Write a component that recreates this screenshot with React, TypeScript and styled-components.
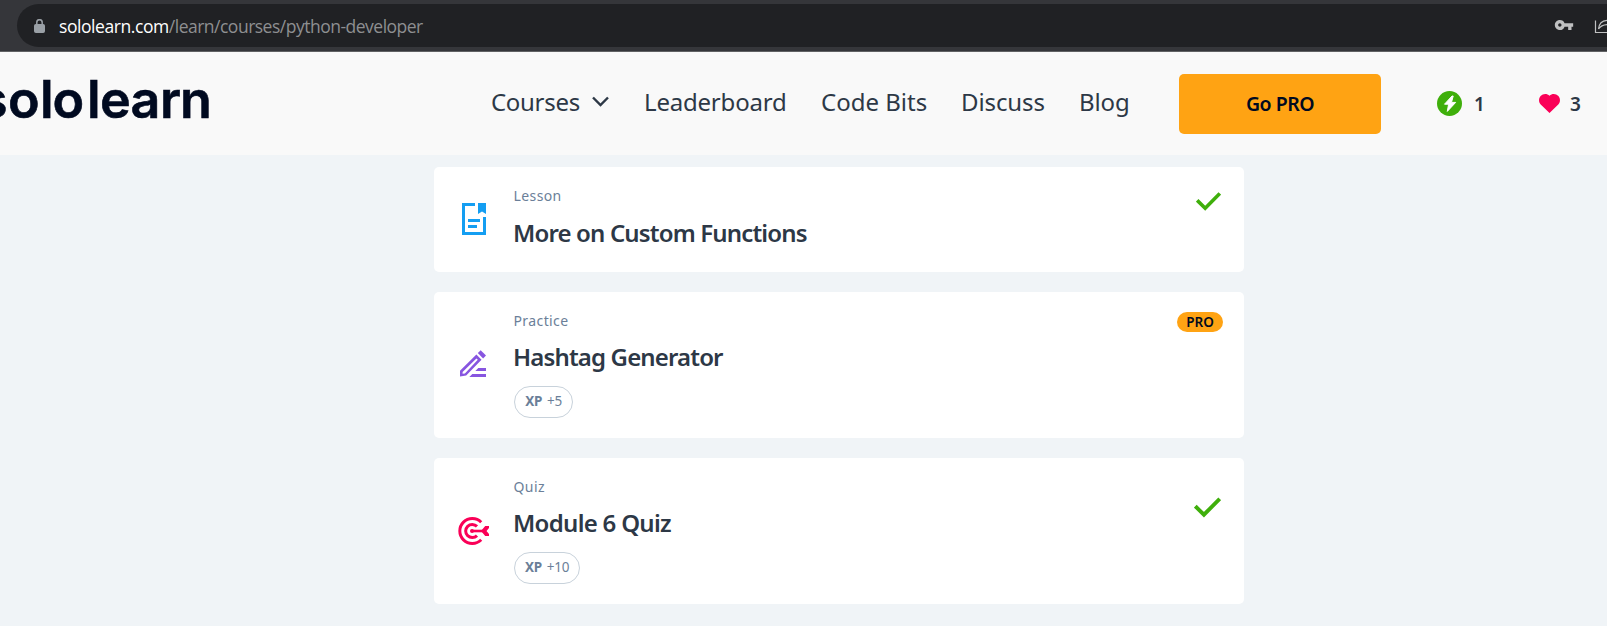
import React from "react";
import styled, { createGlobalStyle } from "styled-components";
import { MdVpnKey } from "react-icons/md";

const GlobalStyle = createGlobalStyle`
  * { box-sizing: border-box; }
  html, body { margin: 0; overflow: hidden; background: #f0f4f7; }
  body { font-family: "Noto Sans", "Open Sans", sans-serif; color: #2d3846; }
  svg { display: block; flex: none; }
`;

const Page = styled.div`
  display: flex;
  flex-direction: column;
  width: 100vw;
  height: 100vh;
  overflow: hidden;
`;

const BrowserBar = styled.div`
  flex: none;
  height: 52px;
  padding: 4px 0 4px 17px;
  background: #35363a;
  border-bottom: 1px solid #616264;
`;

const AddressField = styled.div`
  display: flex;
  align-items: center;
  height: 43px;
  padding-left: 17px;
  border-radius: 22px 0 0 22px;
  background: #202124;
  color: #9aa0a6;
`;

const Url = styled.div`
  flex: 1;
  margin-left: 14px;
  font: 17.5px/24px "Open Sans", "Noto Sans", sans-serif;
  letter-spacing: -0.5px;
  color: #8e8f91;
  white-space: nowrap;
`;

const Host = styled.span`
  color: #fff;
  letter-spacing: -0.43px;
`;

const FieldIcons = styled.div`
  display: flex;
  align-items: center;
  gap: 20px;
  padding-bottom: 1px;
  color: #bfc0c1;
`;

const Header = styled.header`
  flex: none;
  display: flex;
  align-items: center;
  height: 103px;
  background: #f9f9f9;
`;

const Logo = styled.svg`
  font-family: Inter, sans-serif;
  font-size: 52px;
  font-weight: 600;
  fill: #000a20;
  stroke: #000a20;
  stroke-width: 0.6px;
`;

const Nav = styled.nav`
  display: flex;
  align-items: center;
  margin-left: 268px;
`;

const NavItem = styled.a<{ $width: number; $spacing?: number }>`
  display: flex;
  align-items: center;
  width: ${(p) => p.$width}px;
  padding-bottom: 4px;
  font-size: 24px;
  line-height: 32px;
  letter-spacing: ${(p) => p.$spacing ?? 0}px;
  white-space: nowrap;
`;

const Chevron = styled.svg`
  margin: 0 0 0 12px;
`;

const ProButton = styled.button`
  width: 202px;
  height: 60px;
  margin-bottom: -1px;
  padding: 0;
  border: 0;
  border-radius: 5px;
  background: #ffa313;
  color: #000a20;
  font: 600 19.5px/26px "Noto Sans", sans-serif;
  letter-spacing: -0.5px;
`;

const Stat = styled.div<{ $left: number; $gap: number }>`
  display: flex;
  align-items: center;
  gap: ${(p) => p.$gap}px;
  margin-left: ${(p) => p.$left}px;
  font-size: 19px;
  font-weight: 600;
  line-height: 26px;
`;

const List = styled.main`
  display: flex;
  flex-direction: column;
  gap: 20px;
  width: 810px;
  margin: 12px 0 0 434px;
`;

const Card = styled.article<{ $height: number }>`
  display: flex;
  height: ${(p) => p.$height}px;
  border-radius: 5px;
  background: #fff;
`;

const IconCell = styled.div<{ $bottom?: number; $right?: number }>`
  display: flex;
  align-items: center;
  justify-content: center;
  width: 80px;
  padding: 0 ${(p) => p.$right ?? 0}px ${(p) => p.$bottom ?? 0}px 0;
`;

const Body = styled.div`
  flex: 1;
  padding-top: 19px;
`;

const Kind = styled.div`
  margin-left: -0.5px;
  font-size: 14px;
  line-height: 20px;
  letter-spacing: 0.4px;
  color: #6b7f99;
`;

const Title = styled.h2<{ $top: number; $spacing: number }>`
  margin: ${(p) => p.$top}px 0 0 -1px;
  font-size: 24px;
  font-weight: 600;
  line-height: 34px;
  letter-spacing: ${(p) => p.$spacing}px;
  white-space: nowrap;
`;

const XpPill = styled.div<{ $width: number }>`
  display: flex;
  align-items: center;
  justify-content: center;
  gap: 5px;
  width: ${(p) => p.$width}px;
  height: 32px;
  margin-top: 12px;
  padding-bottom: 2px;
  border: 1px solid #c8d2db;
  border-radius: 16px;
  font-size: 13.5px;
  letter-spacing: -0.3px;
  color: #6b7f99;
`;

const Status = styled.div<{ $top: number; $right: number }>`
  padding: ${(p) => `${p.$top}px ${p.$right}px 0 0`};
`;

const ProBadge = styled.div`
  width: 46px;
  height: 20px;
  border-radius: 10px;
  background: #ffa313;
  color: #000a20;
  font-size: 13.5px;
  font-weight: 600;
  line-height: 20px;
  text-align: center;
`;

const LockIcon = () => (
  <svg width="11" height="14" viewBox="0 0 11 14" fill="none" stroke="currentColor">
    <rect x="0.5" y="5.5" width="10" height="8" rx="1" fill="currentColor" />
    <path d="M2.8 6V3.4A2.7 2.7 0 0 1 8.2 3.4V6" strokeWidth="1.5" />
  </svg>
);

const ShareIcon = () => (
  <svg width="13" height="18" viewBox="0 0 13 18" fill="none" stroke="currentColor" strokeWidth="1.2">
    <path d="M1.5 4.5V16.5H13" />
    <path d="M4.5 13C5 7.5 8 4.6 13 4.3M4.5 13C6.5 10 9 8.8 13 8.6" />
  </svg>
);

const BoltIcon = () => (
  <svg width="25" height="25" viewBox="0 0 25 25">
    <circle cx="12.5" cy="12.5" r="12.5" fill="#3faf0b" />
    <path d="M15 5L7.5 13.2H11.6L10.3 20.4L18.7 11.4H14.5L16.2 5Z" fill="#fff" stroke="#fff" strokeLinejoin="round" />
  </svg>
);

const HeartIcon = () => (
  <svg width="21" height="19" viewBox="0 0 21 19" fill="#fa0057">
    <path d="M10.5 19L1.7 10.4C-.5 8.2-.5 4.3 1.6 2.1C4-.5 8-.7 10.5 1.8C13-.7 17-.5 19.4 2.1C21.5 4.3 21.5 8.2 19.3 10.4Z" />
  </svg>
);

const LessonIcon = () => (
  <svg width="24" height="32" viewBox="0 0 24 32" fill="#149ef2">
    <path d="M0 0H13V3H3V29H21V14H24V32H0Z" />
    <path d="M16 0H24V11L20 8.5L16 11Z" />
    <path d="M6 16H18V19H6ZM6 22H15V25H6Z" />
  </svg>
);

const PracticeIcon = () => (
  <svg width="26" height="27" viewBox="0 0 26 27" fill="#8755e0">
    <path fillRule="evenodd" d="M16.4 4.6L21.5 9.7L6.2 25.4L0 26.4V20.8ZM16.4 8.5L2.6 22.1V23.8L4.9 23.4L17.8 9.8Z" />
    <path d="M20.7 .2L26 5.5L23.1 8.4L17.8 3.1Z" />
    <path d="M18.3 18H26V21H15.3ZM12.3 24H26V27H9.3Z" />
  </svg>
);

const QuizIcon = () => (
  <svg width="31" height="28" viewBox="0 0 31 28" fill="none" stroke="#fa0057">
    <path d="M23.2 5.2A12.5 12.5 0 1 0 23.2 22.8" strokeWidth="3" />
    <path d="M19 9.4A6.6 6.6 0 1 0 19 18.6" strokeWidth="3" />
    <path d="M14 14H26" strokeWidth="2.6" />
    <circle cx="14" cy="14" r="2" fill="#fa0057" stroke="none" />
    <path d="M23 14L27.2 9H31V11L28.5 14L31 17V19H27.2Z" fill="#fa0057" stroke="none" />
  </svg>
);

const CheckIcon = ({ width, height }: { width: number; height: number }) => (
  <svg width={width} height={height} viewBox="0 0 25 19" fill="none" stroke="#3faf0b" strokeWidth="3.6">
    <path d="M1.2 8.3L9.2 16.2L23.8 1.4" />
  </svg>
);

export default function App() {
  return (
    <Page>
      <GlobalStyle />
      <BrowserBar>
        <AddressField>
          <LockIcon />
          <Url><Host>sololearn.com</Host>/learn/courses/python-developer</Url>
          <FieldIcons>
            <MdVpnKey size={20} />
            <ShareIcon />
          </FieldIcons>
        </AddressField>
      </BrowserBar>
      <Header>
        <Logo width="223" height="103" aria-label="sololearn">
          <text y="66" x="-21 8 40 52.5 87 100 130.5 160 180">sololearn</text>
        </Logo>
        <Nav>
          <NavItem $width={153} $spacing={-0.3}>
            Courses
            <Chevron width="17" height="11" viewBox="0 0 17 11" fill="none" stroke="#2d3846" strokeWidth="2.4">
              <path d="M1 1.5L8.5 9L16 1.5" />
            </Chevron>
          </NavItem>
          <NavItem $width={177} $spacing={-0.2}>Leaderboard</NavItem>
          <NavItem $width={140}>Code Bits</NavItem>
          <NavItem $width={118} $spacing={-0.1}>Discuss</NavItem>
          <NavItem $width={100} $spacing={-0.1}>Blog</NavItem>
        </Nav>
        <ProButton>Go PRO</ProButton>
        <Stat $left={56} $gap={12}><BoltIcon />1</Stat>
        <Stat $left={54} $gap={10}><HeartIcon />3</Stat>
      </Header>
      <List>
        <Card $height={105}>
          <IconCell $bottom={1}><LessonIcon /></IconCell>
          <Body>
            <Kind>Lesson</Kind>
            <Title $top={10} $spacing={-0.85}>More on Custom Functions</Title>
          </Body>
          <Status $top={25} $right={23}><CheckIcon width={25} height={19} /></Status>
        </Card>
        <Card $height={146}>
          <IconCell $bottom={3} $right={2}><PracticeIcon /></IconCell>
          <Body>
            <Kind>Practice</Kind>
            <Title $top={9} $spacing={-0.85}>Hashtag Generator</Title>
            <XpPill $width={59}><b>XP</b>+5</XpPill>
          </Body>
          <Status $top={20} $right={21}><ProBadge>PRO</ProBadge></Status>
        </Card>
        <Card $height={146}>
          <IconCell $right={1}><QuizIcon /></IconCell>
          <Body>
            <Kind>Quiz</Kind>
            <Title $top={9} $spacing={-0.7}>Module 6 Quiz</Title>
            <XpPill $width={66}><b>XP</b>+10</XpPill>
          </Body>
          <Status $top={39} $right={23}><CheckIcon width={27} height={21} /></Status>
        </Card>
      </List>
    </Page>
  );
}
